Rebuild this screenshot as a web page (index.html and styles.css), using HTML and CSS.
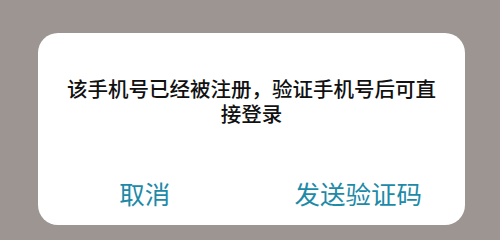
FILE: index.html
```html
<!DOCTYPE html>
<html lang="zh-CN">
<head>
<meta charset="utf-8">
<link rel="stylesheet" href="styles.css">
</head>
<body>
<div class="dialog">
  <p class="message">该手机号已经被注册，验证手机号后可直接登录</p>
  <div class="actions">
    <span class="btn">取消</span>
    <span class="btn">发送验证码</span>
  </div>
</div>
</body>
</html>
```
FILE: styles.css
```css
html, body {
  margin: 0;
  padding: 0;
}
body {
  width: 500px;
  height: 234px;
  overflow: hidden;
  background: #9c9592;
  font-family: "Noto Sans CJK SC", "Noto Sans", sans-serif;
  padding-top: 33px;
  box-sizing: border-box;
}
.dialog {
  margin-left: 38px;
  width: 427px;
  height: 192px;
  background: #ffffff;
  border-radius: 20px;
  box-sizing: border-box;
  padding: 43px 24px 0;
}
.message {
  margin: 0;
  font-size: 20.5px;
  font-weight: 500;
  line-height: 25px;
  color: #111;
  text-align: center;
}
.actions {
  display: flex;
  margin: 54px -24px 0;
}
.btn {
  flex: 1;
  text-align: center;
  font-size: 25.5px;
  font-weight: 400;
  line-height: 25px;
  color: #1d8aa8;
}
```
